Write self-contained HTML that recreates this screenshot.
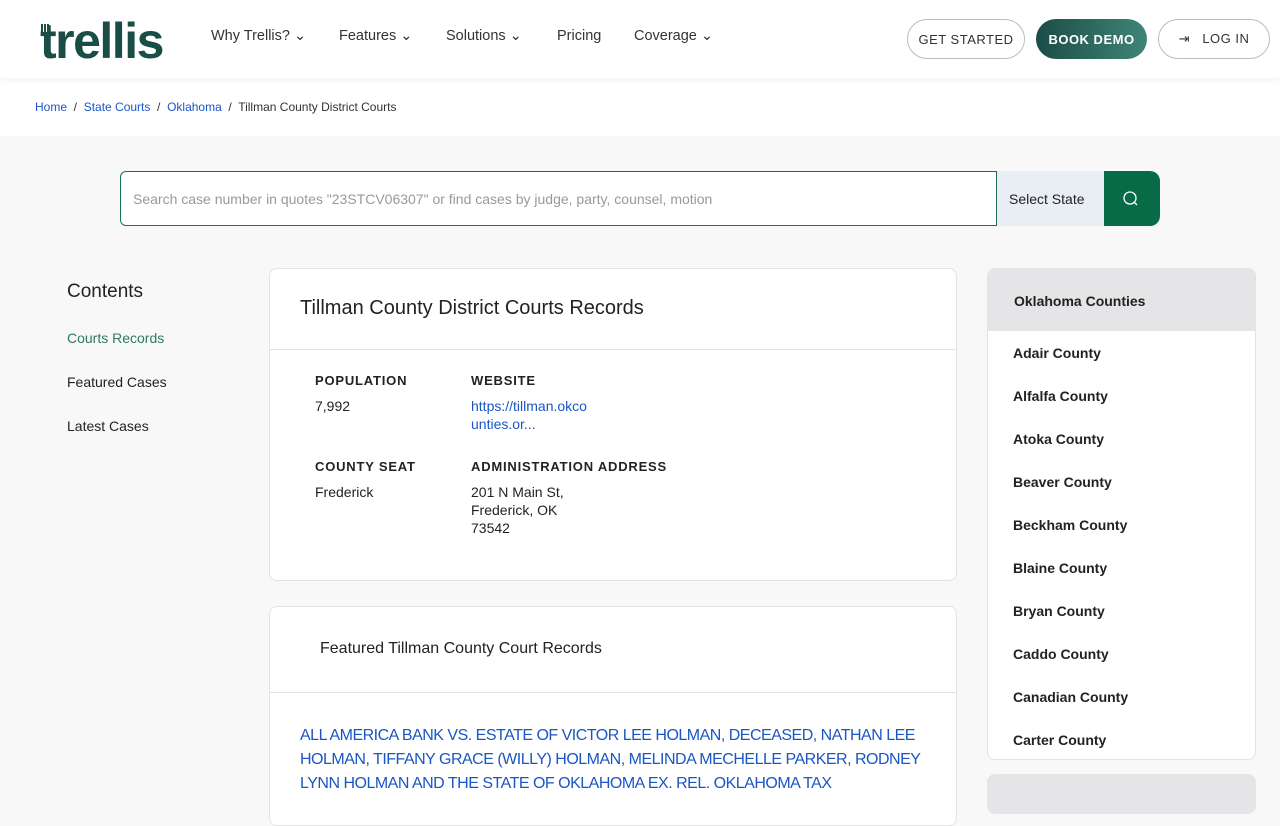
<!DOCTYPE html>
<html><head><meta charset="utf-8"><style>
*{box-sizing:border-box;margin:0;padding:0}
body{width:1280px;height:800px;overflow:hidden;background:#f8f8f9;font-family:"Liberation Sans",sans-serif;color:#222;position:relative}
.hdr{position:absolute;left:0;top:0;width:1280px;height:78px;background:#fff;box-shadow:0 2px 6px rgba(0,0,0,.06);z-index:2}
.logo{position:absolute;left:40px;top:12px;font-size:50px;font-weight:bold;color:#1b4d47;letter-spacing:-1.5px}
.nav{position:absolute;top:28px;font-size:14.5px;color:#333}
.btn{position:absolute;top:19px;height:40px;border-radius:20px;font-size:13px;letter-spacing:.5px;display:flex;align-items:center;justify-content:center}
.bc{position:absolute;left:0;top:78px;width:1280px;height:58px;background:#fff;font-size:12px;padding:22px 35px;color:#333}
.bc a{color:#1a56c4;text-decoration:none}
.search{position:absolute;left:120px;top:171px;width:877px;height:55px;border:1px solid #1b6e5a;border-radius:6px 0 0 6px;background:#fff;font-size:14px;color:#999;padding:19px 12px}
.sel{position:absolute;left:997px;top:171px;width:107px;height:55px;background:#e8eef4;font-size:14px;padding:20px 12px;color:#222}
.go{position:absolute;left:1104px;top:171px;width:56px;height:55px;background:#086b47;border-radius:0 10px 10px 0}
.card{position:absolute;background:#fff;border:1px solid #e3e3e3;border-radius:8px}
.lbl{font-size:13px;font-weight:bold;letter-spacing:.8px;color:#222}
.val{font-size:14px;line-height:18px;color:#222}
.side a{display:block;position:absolute;left:25px;font-size:14px;color:#222;font-weight:bold}
</style></head><body>
<div class="hdr">
<div class="logo">trellis</div>
<div style="position:absolute;left:41px;top:24px;width:8px;height:8px;background:repeating-linear-gradient(90deg,#1b4d47 0 2px,#fff 2px 3px)"></div>
<div class="nav" style="left:211px">Why Trellis? ⌄</div>
<div class="nav" style="left:339px">Features ⌄</div>
<div class="nav" style="left:446px">Solutions ⌄</div>
<div class="nav" style="left:557px">Pricing</div>
<div class="nav" style="left:634px">Coverage ⌄</div>
<div class="btn" style="left:907px;width:118px;border:1px solid #bbb;color:#333">GET STARTED</div>
<div class="btn" style="left:1036px;width:111px;background:linear-gradient(90deg,#1b4d47,#3f8576);color:#fff;font-weight:bold">BOOK DEMO</div>
<div class="btn" style="left:1158px;width:112px;border:1px solid #bbb;color:#333">⇥&nbsp;&nbsp;&nbsp;LOG IN</div>
</div>
<div class="bc"><a>Home</a> &nbsp;/&nbsp; <a>State Courts</a> &nbsp;/&nbsp; <a>Oklahoma</a> &nbsp;/&nbsp; Tillman County District Courts</div>
<div class="search">Search case number in quotes "23STCV06307" or find cases by judge, party, counsel, motion</div>
<div class="sel">Select State</div>
<div class="go"><svg width="56" height="55"><circle cx="26" cy="27" r="6" fill="none" stroke="#fff" stroke-width="1.3"/><path d="M30 31l3 3" stroke="#fff" stroke-width="1.3"/></svg></div>
<div style="position:absolute;left:67px;top:281px;font-size:19px">Contents</div>
<div style="position:absolute;left:67px;top:330px;font-size:14px;color:#2f7a5e">Courts Records</div>
<div style="position:absolute;left:67px;top:374px;font-size:14px">Featured Cases</div>
<div style="position:absolute;left:67px;top:418px;font-size:14px">Latest Cases</div>
<div class="card" style="left:269px;top:268px;width:688px;height:313px">
<div style="position:absolute;left:30px;top:28px;font-size:20px">Tillman County District Courts Records</div>
<div style="position:absolute;left:0;top:80px;width:100%;border-top:1px solid #e3e3e3"></div>
<div class="lbl" style="position:absolute;left:45px;top:104px">POPULATION</div>
<div class="val" style="position:absolute;left:45px;top:128px">7,992</div>
<div class="lbl" style="position:absolute;left:201px;top:104px">WEBSITE</div>
<div class="val" style="position:absolute;left:201px;top:128px;color:#1a56c4">https://tillman.okco<br>unties.or...</div>
<div class="lbl" style="position:absolute;left:45px;top:190px">COUNTY SEAT</div>
<div class="val" style="position:absolute;left:45px;top:214px">Frederick</div>
<div class="lbl" style="position:absolute;left:201px;top:190px">ADMINISTRATION ADDRESS</div>
<div class="val" style="position:absolute;left:201px;top:214px">201 N Main St,<br>Frederick, OK<br>73542</div>
</div>
<div class="card" style="left:269px;top:606px;width:688px;height:220px">
<div style="position:absolute;left:50px;top:33px;font-size:16px">Featured Tillman County Court Records</div>
<div style="position:absolute;left:0;top:85px;width:100%;border-top:1px solid #e3e3e3"></div>
<div style="position:absolute;left:30px;top:117px;width:630px;font-size:16px;line-height:24px;color:#1a56c4;letter-spacing:-0.5px">ALL AMERICA BANK VS. ESTATE OF VICTOR LEE HOLMAN, DECEASED, NATHAN LEE HOLMAN, TIFFANY GRACE (WILLY) HOLMAN, MELINDA MECHELLE PARKER, RODNEY LYNN HOLMAN AND THE STATE OF OKLAHOMA EX. REL. OKLAHOMA TAX</div>
</div>
<div class="card side" style="left:987px;top:268px;width:269px;height:492px;overflow:hidden">
<div style="height:62px;background:#e5e5e7;font-size:14px;font-weight:bold;padding:24px 26px">Oklahoma Counties</div>
<a style="top:76px">Adair County</a><a style="top:119px">Alfalfa County</a><a style="top:162px">Atoka County</a><a style="top:205px">Beaver County</a><a style="top:248px">Beckham County</a><a style="top:291px">Blaine County</a><a style="top:334px">Bryan County</a><a style="top:377px">Caddo County</a><a style="top:420px">Canadian County</a><a style="top:463px">Carter County</a>
</div>
<div style="position:absolute;left:987px;top:774px;width:269px;height:40px;background:#e5e5e7;border-radius:8px"></div>
</body></html>
